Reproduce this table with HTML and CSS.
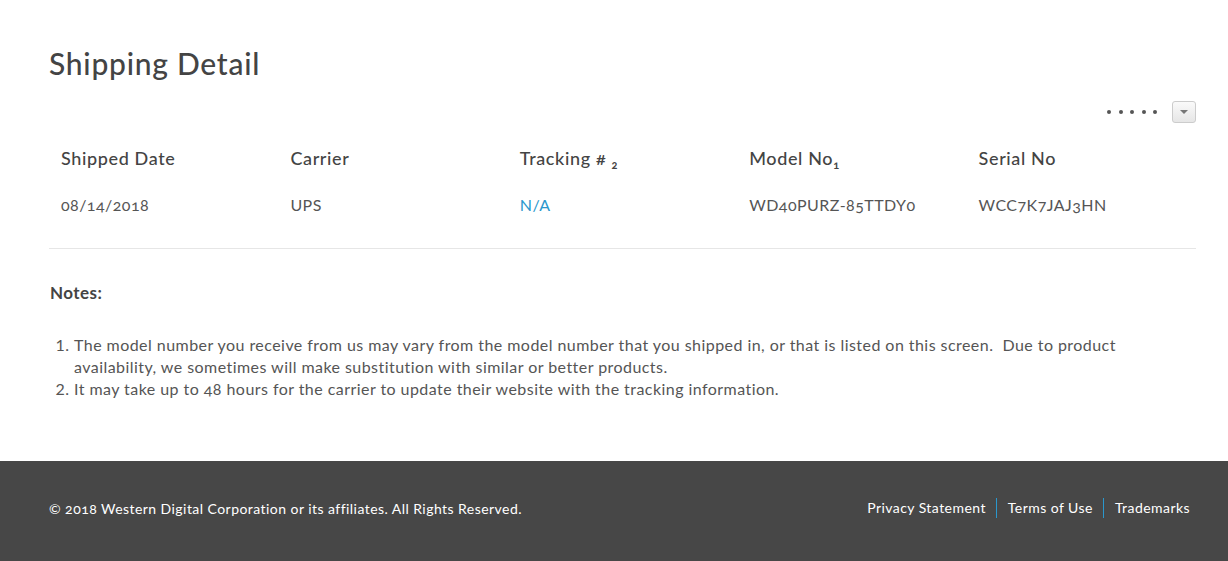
FILE: index.html
```html
<!DOCTYPE html>
<html>
<head>
<meta charset="utf-8">
<link rel="stylesheet" href="styles.css">
</head>
<body>
<main class="content">
  <h1 class="title">Shipping Detail</h1>
  <div class="tools">
    <span class="dots"><i></i><i></i><i></i><i></i><i></i></span>
    <span class="dropdown"><svg width="10" height="6" viewBox="0 0 10 6"><path d="M1 1h8L5 5z" fill="#777"/></svg></span>
  </div>
  <div class="table">
    <div class="row head">
      <div class="cell">Shipped Date</div>
      <div class="cell">Carrier</div>
      <div class="cell">Tracking # <sub>2</sub></div>
      <div class="cell">Model No<sub>1</sub></div>
      <div class="cell">Serial No</div>
    </div>
    <div class="row body">
      <div class="cell">08/14/2018</div>
      <div class="cell">UPS</div>
      <div class="cell"><a class="link" href="#">N/A</a></div>
      <div class="cell">WD40PURZ-85TTDY0</div>
      <div class="cell">WCC7K7JAJ3HN</div>
    </div>
  </div>
  <h2 class="notes-title">Notes:</h2>
  <ol class="notes">
    <li>The model number you receive from us may vary from the model number that you shipped in, or that is listed on this screen.&nbsp; Due to product availability, we sometimes will make substitution with similar or better products.</li>
    <li>It may take up to 48 hours for the carrier to update their website with the tracking information.</li>
  </ol>
</main>
<footer class="footer">
  <div class="copy">© 2018 Western Digital Corporation or its affiliates. All Rights Reserved.</div>
  <nav class="links">
    <a href="#">Privacy Statement</a>
    <a href="#">Terms of Use</a>
    <a href="#">Trademarks</a>
  </nav>
</footer>
</body>
</html>
```
FILE: styles.css
```css
* { box-sizing: border-box; }
html, body { margin: 0; padding: 0; }
body {
  font-family: Lato, "Liberation Sans", sans-serif;
  font-variant-numeric: oldstyle-nums;
  letter-spacing: 0.028em;
  color: #444;
  background: #fff;
}
.content {
  padding: 44px 32px 0 49px;
  height: 461px;
}
.title {
  margin: 0;
  font-size: 30px;
  font-weight: 500;
  line-height: 38px;
  letter-spacing: 0.025em;
  color: #444;
}
.tools {
  display: flex;
  justify-content: flex-end;
  align-items: center;
  gap: 15px;
  margin-top: 19px;
  height: 22px;
}
.dots { display: flex; gap: 7.5px; }
.dots i { width: 4px; height: 4px; border-radius: 50%; background: #555; display: block; }
.dropdown {
  width: 24px; height: 22px;
  border: 1px solid #ccc;
  border-radius: 3px;
  background: linear-gradient(#fafafa, #e6e6e6);
  display: flex; align-items: center; justify-content: center;
}
.table {
  border-bottom: 1px solid #e6e6e6;
  margin-top: 12px;
}
.row { display: grid; grid-template-columns: repeat(5, 1fr); }
.cell { padding-left: 12px; }
.head { height: 46px; align-items: center; font-size: 18px; font-weight: 500; color: #444; letter-spacing: 0.035em; }
.head sub { font-size: 11px; vertical-align: -4px; line-height: 0; font-weight: 700; }
.body { height: 67px; align-items: start; font-size: 16px; color: #555; padding-top: 14px; }
.link { color: #2a97cd; text-decoration: none; }
.notes-title {
  margin: 32px 0 0 1px;
  font-size: 17px;
  font-weight: 700;
  line-height: 24px;
}
.notes {
  margin: 29px 0 0;
  padding-left: 25px;
  font-size: 16px;
  line-height: 22px;
  color: #555;
}
.footer {
  height: 100px;
  background: #474747;
  color: #fff;
  display: flex;
  justify-content: space-between;
  align-items: center;
  padding: 0 38px 6px 49px;
  font-size: 14px;
}
.links { display: flex; }
.links a { color: #fff; text-decoration: none; padding: 0 10px 0 11px; border-left: 1px solid #2a97cd; line-height: 20px; }
.links a:first-child { border-left: none; }
.links a:last-child { padding-right: 0; }
```
